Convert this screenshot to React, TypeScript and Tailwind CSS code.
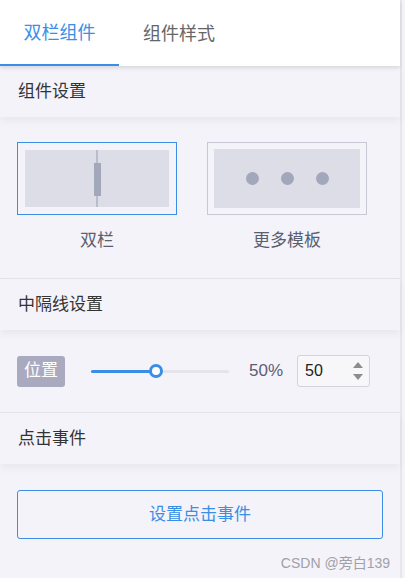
import React from 'react';

const font = { fontFamily: '"Liberation Sans", "Noto Sans CJK SC", sans-serif' };

const SectionHeader: React.FC<{ title: string }> = ({ title }) => (
  <div className="relative z-10 h-[51px] flex items-center pl-[18px] bg-[#f4f3f9] shadow-[0_4px_8px_rgba(0,0,0,0.05)] text-[17px] text-[#333]">
    {title}
  </div>
);

export default function App() {
  return (
    <div className="flex w-[405px] h-[578px] bg-[#f4f3f9] overflow-hidden" style={font}>
      <div className="w-[400px] flex flex-col">
        {/* Tabs */}
        <div className="relative z-20 h-[66px] bg-white flex shadow-[0_2px_4px_rgba(0,0,0,0.12)]">
          <div className="w-[119px] flex items-center justify-center text-[18px] text-[#3a8ee6] border-b-2 border-[#3a8ee6] pt-[2px]">
            双栏组件
          </div>
          <div className="w-[120px] flex items-center justify-center text-[18px] text-[#666] pt-[2px]">
            组件样式
          </div>
        </div>

        <SectionHeader title="组件设置" />
        <div className="h-[162px] pt-[25px] border-b border-[#e4e4ea]">
          <div className="flex gap-[30px] px-[17px]">
            <div className="flex flex-col items-center">
              <div className="w-[160px] h-[73px] border border-[#3a8ee6] p-[7px]">
                <div className="relative h-full bg-[#dddde8] flex justify-center">
                  <div className="w-[2px] h-full bg-[#b9bccc]" />
                  <div className="absolute top-[13px] w-[7px] h-[33px] bg-[#a3a7ba] left-[69px]" />
                </div>
              </div>
              <div className="mt-[13px] text-[17px] text-[#5a5e6e]">双栏</div>
            </div>
            <div className="flex flex-col items-center">
              <div className="w-[160px] h-[73px] border border-[#c8c8d4] p-[6px]">
                <div className="h-full bg-[#dddde8] flex items-center justify-center gap-[22px]">
                  <span className="w-[13px] h-[13px] rounded-full bg-[#a3a7ba]" />
                  <span className="w-[13px] h-[13px] rounded-full bg-[#a3a7ba]" />
                  <span className="w-[13px] h-[13px] rounded-full bg-[#a3a7ba]" />
                </div>
              </div>
              <div className="mt-[13px] text-[17px] text-[#5a5e6e]">更多模板</div>
            </div>
          </div>
        </div>

        <SectionHeader title="中隔线设置" />
        <div className="h-[83px] flex items-center px-[17px] border-b border-[#e4e4ea]">
          <div className="w-[48px] h-[31px] rounded-[3px] bg-[#a9aabf] text-white text-[17px] flex items-center justify-center">
            位置
          </div>
          <div className="relative ml-[26px] w-[138px] h-[12px] flex items-center">
            <div className="w-full h-[3px] rounded-full bg-[#e4e4ea]" />
            <div className="absolute left-0 w-[65px] h-[3px] rounded-full bg-[#3a8ee6]" />
            <div className="absolute left-[58px] w-[14px] h-[14px] rounded-full bg-white border-[3px] border-[#3a8ee6]" />
          </div>
          <div className="ml-[20px] text-[17px] text-[#5b5e70]">50%</div>
          <div className="ml-[14px] w-[73px] h-[32px] rounded-[3px] border border-[#d3d3dc] bg-[#f7f7f9] flex items-center justify-between pl-[7px] pr-[6px]">
            <span className="text-[16px] text-[#222]">50</span>
            <div className="flex flex-col gap-[6px]">
              <svg width="10" height="6" viewBox="0 0 10 6"><path d="M0 6 L5 0 L10 6 Z" fill="#8c8c8c" /></svg>
              <svg width="10" height="6" viewBox="0 0 10 6"><path d="M0 0 L5 6 L10 0 Z" fill="#8c8c8c" /></svg>
            </div>
          </div>
        </div>

        <SectionHeader title="点击事件" />
        <div className="flex-1 px-[17px] pt-[26px]">
          <div className="h-[49px] rounded-[3px] border border-[#3a8ee6] flex items-center justify-center text-[17px] text-[#3a8ee6]">
            设置点击事件
          </div>
          <div className="mt-[14px] text-right text-[14px] text-[#a0a0a8] mr-[-7px]">CSDN @旁白139</div>
        </div>
      </div>
      <div className="flex-1 border-l-2 border-[#e6e6ec] bg-[#f4f4f8]" />
    </div>
  );
}
